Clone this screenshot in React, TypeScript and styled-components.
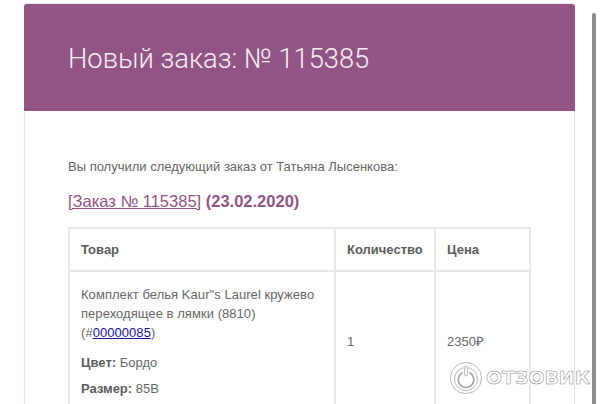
import styled, { createGlobalStyle } from 'styled-components';

const GlobalStyle = createGlobalStyle`
  html,
  body {
    margin: 0;
    padding: 0;
    background: #fff;
  }

  body {
    font-family: "Liberation Sans", Arial, sans-serif;
  }
`;

const Page = styled.div`
  position: relative;
  width: 600px;
  height: 404px;
  padding: 4px 24px 0;
  box-sizing: border-box;
  overflow: hidden;
`;

const Card = styled.div`
  width: 551px;
  box-sizing: border-box;
  border: 1px solid #e4e4e4;
  border-top: 0;
  border-radius: 3px 3px 0 0;
  box-shadow: 0 -1px 1px #e8e8e8;
`;

const Header = styled.header`
  display: flex;
  align-items: center;
  height: 107px;
  margin: 0 -1px;
  padding: 0 44px;
  background: #915485;
  border-radius: 3px 3px 0 0;
`;

const Title = styled.h1`
  margin: 2px 0 0;
  font-family: Roboto, sans-serif;
  font-size: 27.3px;
  font-weight: 300;
  color: #f6eff4;
`;

const Body = styled.div`
  padding: 48px 43px 0;
`;

const Intro = styled.p`
  margin: 0;
  font-size: 13px;
  line-height: 16px;
  color: #666;
`;

const OrderHeading = styled.h2`
  margin: 16px 0 16px;
  font-size: 16.5px;
  line-height: 20px;
  font-weight: 700;
  color: #915485;
`;

const OrderLink = styled.a`
  font-weight: 400;
  text-decoration: underline;
`;

const Table = styled.div`
  display: grid;
  grid-template-columns: 266px 100px 95px;
  grid-template-rows: 43px 140px;
  width: 463px;
  border-top: 2px solid #e8e8e8;
  border-left: 2px solid #e8e8e8;
  box-sizing: border-box;
`;

const Cell = styled.div<{ $head?: boolean; $middle?: boolean }>`
  display: flex;
  flex-direction: column;
  justify-content: ${({ $middle, $head }) => ($middle || $head ? 'center' : 'flex-start')};
  padding: ${({ $head, $middle }) => ($head || $middle ? '0 11px' : '13px 11px')};
  border-right: 2px solid #e8e8e8;
  border-bottom: 2px solid #e8e8e8;
  font-size: 13px;
  line-height: 19px;
  font-weight: ${({ $head }) => ($head ? 700 : 400)};
  color: ${({ $head }) => ($head ? '#5c5c5c' : '#686868')};
`;

const ProductName = styled.div`
  margin-bottom: 11px;
`;

const ProductLine = styled.div`
  white-space: nowrap;
  letter-spacing: 0.05px;
`;

const SkuLink = styled.a`
  color: #1a12a8;
  text-decoration: underline;
`;

const Attribute = styled.div`
  margin-bottom: 7px;

  b {
    color: #5c5c5c;
  }
`;

const Scrollbar = styled.div`
  position: absolute;
  top: 13px;
  bottom: 0;
  left: 592px;
  width: 4px;
  border-radius: 2px 2px 0 0;
  background: #8f8f8f;
`;

const Watermark = styled.div`
  position: absolute;
  left: 450px;
  top: 362px;
  display: flex;
  align-items: center;
  gap: 4px;
`;

const WatermarkText = styled.span`
  font-family: "DejaVu Sans", sans-serif;
  font-size: 18px;
  font-weight: 700;
  line-height: 1;
  color: #fff;
  -webkit-text-stroke: 0.5px #8a8a8a;
  transform: scaleX(1.05);
  transform-origin: left center;
`;

const WatermarkLogo = () => (
  <svg width="32" height="32" viewBox="0 0 32 32" fill="none" stroke="#8a8a8a" strokeWidth="0.6">
    <circle cx="16" cy="16" r="15.6" fill="#fff" />
    <circle cx="16" cy="17" r="11.5" />
    <path d="M12.8 10.6a7.8 7.8 0 1 0 6.4 0" strokeWidth="1.6" stroke="#a8a8a8" />
    <rect x="14.6" y="4" width="2.8" height="10" rx="1.4" fill="#fff" />
  </svg>
);

export default function App() {
  return (
    <>
      <GlobalStyle />
      <Page>
        <Card>
          <Header>
            <Title>Новый заказ: № 115385</Title>
          </Header>
          <Body>
            <Intro>Вы получили следующий заказ от Татьяна Лысенкова:</Intro>
            <OrderHeading>
              <OrderLink>[Заказ № 115385]</OrderLink> (23.02.2020)
            </OrderHeading>
            <Table>
              <Cell $head>Товар</Cell>
              <Cell $head>Количество</Cell>
              <Cell $head>Цена</Cell>
              <Cell>
                <ProductName>
                  <ProductLine>Комплект белья Kaur"s Laurel кружево</ProductLine>
                  <ProductLine>переходящее в лямки (8810)</ProductLine>
                  <ProductLine>
                    (#<SkuLink>00000085</SkuLink>)
                  </ProductLine>
                </ProductName>
                <Attribute>
                  <b>Цвет:</b> Бордо
                </Attribute>
                <Attribute>
                  <b>Размер:</b> 85B
                </Attribute>
              </Cell>
              <Cell $middle>1</Cell>
              <Cell $middle>2350₽</Cell>
            </Table>
          </Body>
        </Card>
        <Scrollbar />
        <Watermark>
          <WatermarkLogo />
          <WatermarkText>ОТЗОВИК</WatermarkText>
        </Watermark>
      </Page>
    </>
  );
}
